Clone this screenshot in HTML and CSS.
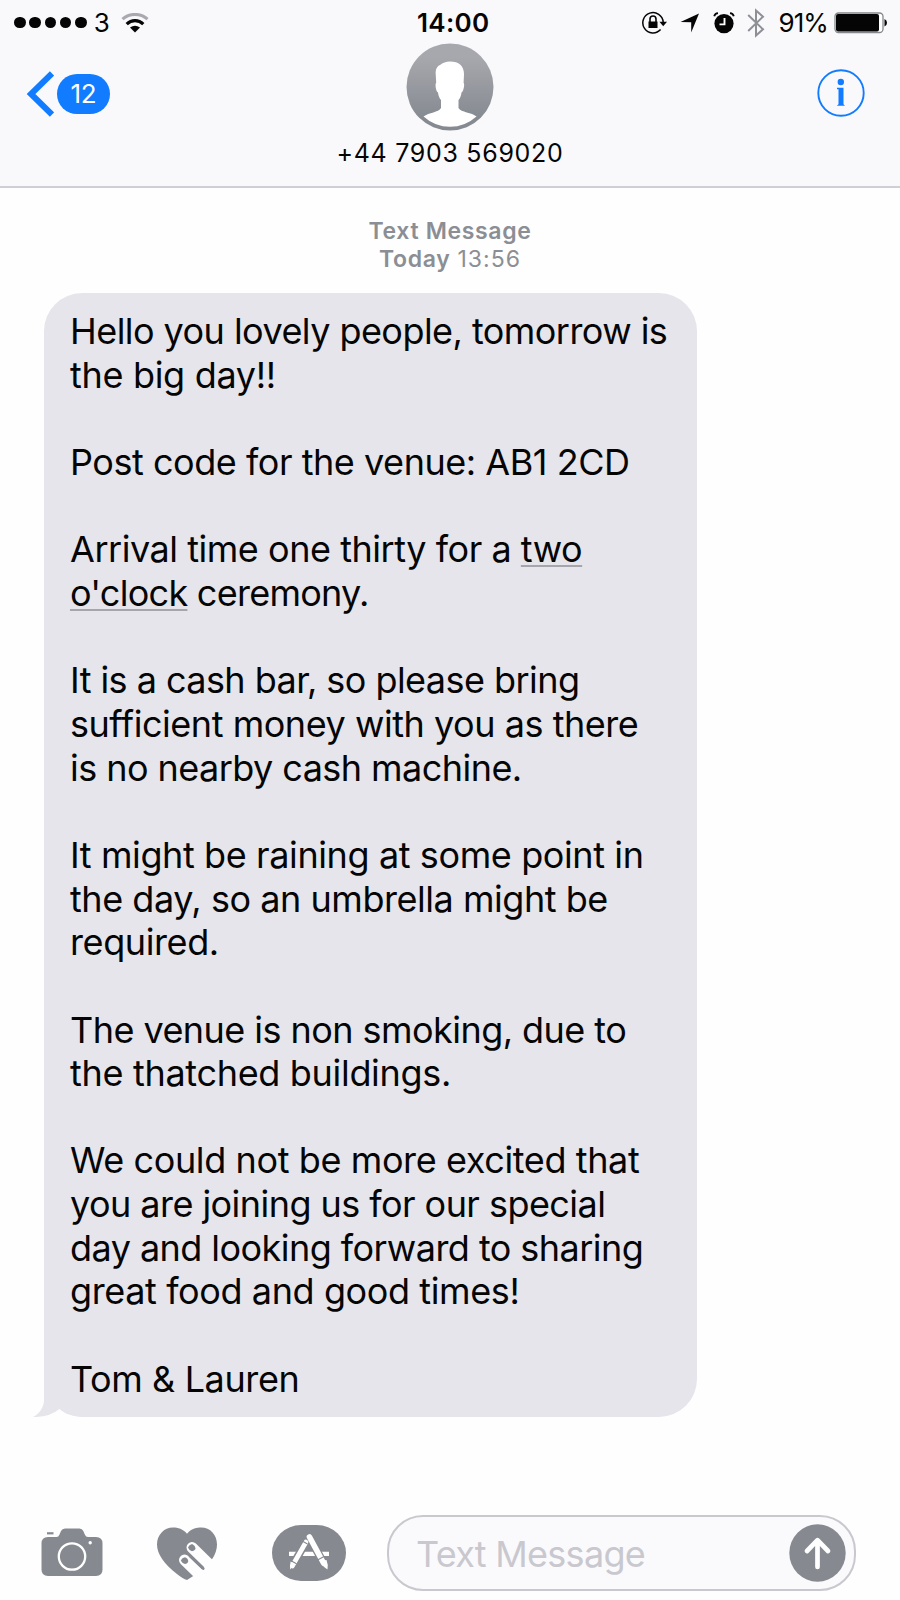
FILE: index.html
```
<!DOCTYPE html>
<html lang="en">
<head>
<meta charset="utf-8">
<title>Messages</title>
<link rel="stylesheet" href="styles.css">
</head>
<body>
<div class="screen">
  <header class="header">
    <div class="status">
      <div class="status-left">
        <div class="signal"><i></i><i></i><i></i><i></i><i></i></div>
        <span class="carrier">3</span>
        <svg class="wifi" width="28" height="20" viewBox="0 0 28 20">
          <path d="M1.5 6.2C8.5-.2 19.500-.2 26.500 6.200" fill="none" stroke="#a9a9af" stroke-width="3"/>
          <path d="M5.700 11.200C10.500 6.500 17.500 6.500 22.300 11.200" fill="none" stroke="#050505" stroke-width="3.200"/>
          <path d="M9 14.500Q14 11.200 19 14.500L14 19.500Z" fill="#050505"/>
        </svg>
      </div>
      <div class="time">14:00</div>
      <div class="status-right">
        <svg class="lock" width="26" height="24" viewBox="0 0 26 24">
          <path d="M18.600 18.600A10.200 10.200 0 1 1 21.200 11" fill="none" stroke="#050505" stroke-width="1.500"/>
          <path d="M17.500 10.800h7.500l-3.800 4.500z" fill="#050505"/>
          <rect x="6.500" y="10.500" width="9" height="6.500" fill="#050505"/>
          <path d="M8 11V8a3 3 0 0 1 6 0v3" fill="none" stroke="#050505" stroke-width="1.600"/>
        </svg>
        <svg class="arrow" width="20" height="20" viewBox="0 0 20 20"><path d="M19 .5L11.200 19.500V9.300L.5 9Z" fill="#050505"/></svg>
        <svg class="alarm" width="22" height="22" viewBox="0 0 22 22">
          <circle cx="11" cy="11.600" r="9.600" fill="#050505"/>
          <path d="M1.200 4.200Q2 1.500 5 1.200M17 1.200Q20 1.500 20.800 4.200" fill="none" stroke="#050505" stroke-width="1.800"/>
          <path d="M11.500 6v6.400H6.500" fill="none" stroke="#fff" stroke-width="1.900"/>
        </svg>
        <svg class="bluetooth" width="18" height="30" viewBox="0 0 18 30"><path d="M1.200 7L16 21.300 9 27.500V2.500L16 8.700 1.200 23" fill="none" stroke="#8e9096" stroke-width="2"/></svg>
        <span class="percent">91%</span>
        <svg class="battery" width="54" height="22" viewBox="0 0 54 22">
          <rect x="1" y="1" width="48" height="19.500" rx="3.500" fill="#fff" stroke="#85878c" stroke-width="1.300"/>
          <rect x="2" y="2" width="43" height="17.500" rx="2" fill="#050505"/>
          <path d="M50.500 7Q53 8 53 10.800T50.500 14.600Z" fill="#050505"/>
        </svg>
      </div>
    </div>
    <div class="nav">
      <div class="back">
        <svg width="28" height="46" viewBox="0 0 28 46"><path d="M26 2.500L5 23L26 43.500" fill="none" stroke="#117cff" stroke-width="6"/></svg>
        <span class="count">12</span>
      </div>
      <div class="contact">
        <svg width="88" height="88" viewBox="0 0 88 88">
          <defs><linearGradient id="shade" x1="0" y1="0" x2="0" y2="1"><stop offset=".15" stop-color="#a7a8ae"/><stop offset=".85" stop-color="#868b91"/></linearGradient></defs>
          <circle cx="44" cy="44" r="43.500" fill="url(#shade)"/>
          <path d="M44 18.500C53 18.500 58 23 58 31L57.600 40C58.800 40 58 48 55.500 49.500C55 53 54 55.500 52.500 57V65C55 69.500 66 69.500 70.500 73.500Q59 83.800 44 83.800T17.500 73.500C23 69.500 32.500 69.500 35 65V57C33.500 55.500 32.500 53 32 49.500C29.500 48 29 40 30.200 40L29.700 31C29.500 26 31 23.500 34 22Q38 18.500 44 18.500Z" fill="#fff"/>
        </svg>
        <span class="number">+44 7903 569020</span>
      </div>
      <svg class="info" width="48" height="48" viewBox="0 0 48 48">
        <circle cx="24" cy="24" r="22.700" fill="none" stroke="#117cff" stroke-width="1.900"/>
        <circle cx="23.800" cy="13" r="3.200" fill="#117cff"/>
        <path d="M20 18.800H26.500V35.200L28 36.700H19.800L21.500 35.200V20.300H20Z" fill="#117cff"/>
      </svg>
    </div>
  </header>

  <main class="thread">
    <div class="stamp"><b>Text Message</b><br><b>Today</b> <span class="stamp-time">13:56</span></div>
    <div class="bubble">
      <p><span class="line tight">Hello you lovely people, tomorrow is</span><span class="line loose">the big day!!</span></p>
      <p><span class="line">Post code for the venue: AB1 2CD</span></p>
      <p><span class="line">Arrival time one thirty for a <u>two</u></span><span class="line tighter"><u>o'clock</u> ceremony.</span></p>
      <p><span class="line tight">It is a cash bar, so please bring</span><span class="line">sufficient money with you as there</span><span class="line tight">is no nearby cash machine.</span></p>
      <p><span class="line mid">It might be raining at some point in</span><span class="line">the day, so an umbrella might be</span><span class="line mid">required.</span></p>
      <p><span class="line tight">The venue is non smoking, due to</span><span class="line loose">the thatched buildings.</span></p>
      <p><span class="line mid">We could not be more excited that</span><span class="line tight">you are joining us for our special</span><span class="line tight">day and looking forward to sharing</span><span class="line mid">great food and good times!</span></p>
      <p><span class="line mid">Tom &amp; Lauren</span></p>
      <svg class="tail" width="54" height="38" viewBox="0 0 54 38"><path d="M11 0V22C10.500 29 6 35 0 38Q16 38.500 26.500 30Q36 38 54 38V16H24V0Z" fill="#e6e5eb"/><path d="M17 38Q22 34.500 26.500 30Q31 34.500 38 38Z" fill="#fefefe"/></svg>
    </div>
  </main>

  <footer class="composer">
    <svg class="camera" width="62" height="49" viewBox="0 0 62 49">
      <path d="M7 9H15.500Q17.500 9 18.500 6.500L20 3Q21.200.5 24 .5H38.500Q41.200.5 42.300 3L43.800 6.500Q44.800 9 47 9H55Q61.500 9 61.500 15.500V41.500Q61.500 48 55 48H7Q.500 48 .500 41.500V15.500Q.500 9 7 9Z" fill="#868a90"/>
      <path d="M6 5.300H12.500" stroke="#868a90" stroke-width="2.200"/>
      <circle cx="31" cy="28.500" r="13.200" fill="none" stroke="#fff" stroke-width="2.300"/>
      <circle cx="49.200" cy="14.800" r="1.700" fill="#fff"/>
    </svg>
    <svg class="heart" width="62" height="54" viewBox="0 0 62 54">
      <path d="M31 6.700C36 1 41 .5 45 .5C54.500.5 61 8 61 17.500Q61 25 56 32.200L42 46L31 53Q27 52 21 47C8 37 1 27 1 17.500C1 8 8 .5 17 .5C22 .5 27 2 31 6.700Z" fill="#868a90"/>
      <path d="M62 26L54 36L36.500 54.500H62Z" fill="#fefefe"/>
      <g stroke="#fefefe" stroke-width="11" stroke-linecap="round"><path d="M36 20.500L60 44"/><path d="M28.500 33L46 50"/></g>
      <path d="M34 29L47.200 41.500" stroke="#868a90" stroke-width="2.800" stroke-linecap="round"/>
      <path d="M32 20.500Q33 17.500 36 17Q39.500 18.500 39.500 22Q38.500 24 36 24.200Q33 23.500 32 20.500Z" fill="#868a90"/>
      <path d="M24.800 33.500Q26 30.500 29 30.200Q32.500 31.500 32.200 35Q31 37 29 37Q26 36.300 24.800 33.500Z" fill="#868a90"/>
    </svg>
    <svg class="apps" width="74" height="56" viewBox="0 0 74 56">
      <rect width="74" height="56" rx="29" ry="28" fill="#868a90"/>
      <path d="M17 28.800H57" stroke="#fff" stroke-width="4.300"/>
      <path d="M34 17L20.300 41" stroke="#868a90" stroke-width="8"/>
      <path d="M37.500 12L53 41" stroke="#868a90" stroke-width="8"/>
      <path d="M37.500 12L51.500 38" stroke="#fff" stroke-width="5.600" stroke-linecap="round"/>
      <path d="M34 17L20.300 41" stroke="#fff" stroke-width="4.700" stroke-linecap="round"/>
      <path d="M18.500 36.500L23.300 39L18 44.500Z" fill="#fff"/>
      <path d="M48.500 36L54.500 35Q56.500 40 55.500 44.500Q50 41.500 48.500 36Z" fill="#fff"/>
      <path d="M46 34.700L52 31.500M19.500 36L24.500 38.800M31 16.500L35.500 19" stroke="#868a90" stroke-width="1.100"/>
    </svg>
    <div class="field">
      <span class="placeholder">Text Message</span>
      <svg class="send" width="57" height="58" viewBox="0 0 57 58">
        <ellipse cx="28.500" cy="29" rx="28.200" ry="28.700" fill="#868a90"/>
        <path d="M28.500 43V17M18 27L28.500 16.200L39 27" fill="none" stroke="#fff" stroke-width="4.700" stroke-linecap="round" stroke-linejoin="round"/>
      </svg>
    </div>
  </footer>
</div>
</body>
</html>
```
FILE: styles.css
```
* { box-sizing: border-box; }
body { margin: 0; font-family: Inter, "Open Sans", sans-serif; color: #050505; background: #fefefe; }
svg { display: block; flex: none; }
.screen { width: 900px; height: 1600px; display: flex; flex-direction: column; overflow: hidden; }

.header { height: 188px; flex: none; background: #f9f9fb; border-bottom: 2px solid #d0cfd5; }
.status { height: 43px; display: grid; grid-template-columns: 1fr 74px 1fr; padding: 0 12px 0 14px; font-size: 26px; line-height: 45px; }
.status-left, .status-right { display: flex; align-items: center; }
.signal { display: flex; gap: 3.7px; }
.signal i { width: 11.600px; height: 11.600px; border-radius: 50%; background: #050505; }
.carrier { margin-left: 7px; width: 17px; }
.wifi { margin-left: 10px; }
.time { font-weight: 600; letter-spacing: .3px; padding-left: 3px; white-space: nowrap; }
.status-right { justify-content: flex-end; }
.arrow { margin-left: 12px; }
.alarm { margin-left: 13px; }
.bluetooth { margin-left: 12px; }
.percent { margin-left: 13px; letter-spacing: -.9px; }
.battery { margin-left: 6px; }

.nav { height: 143px; display: grid; grid-template-columns: 1fr 240px 1fr; }
.back { display: flex; align-items: center; height: 46px; margin: 28px 0 0 26px; }
.count { width: 53px; height: 40px; margin-left: 3px; border-radius: 20px; background: #117cff; color: #fff; font-size: 26px; line-height: 40px; text-align: center; letter-spacing: -.2px; }
.contact { display: flex; flex-direction: column; align-items: center; }
.number { font-size: 25px; line-height: 32px; margin-top: 6px; letter-spacing: .7px; white-space: nowrap; }
.info { justify-self: end; margin: 26px 35px 0 0; }

.thread { flex: 1; padding-left: 44px; }
.stamp { width: 812px; height: 105px; padding-top: 29px; text-align: center; font-size: 23px; line-height: 28px; color: #8b8e94; letter-spacing: .65px; }
.stamp b { font-weight: 600; }
.stamp-time { letter-spacing: 1px; }
.bubble { position: relative; width: 653px; height: 1124px; padding: 17px 0 0 26px; border-radius: 38px; background: #e6e5eb; font-size: 36px; line-height: 43.660px; }
.bubble p { margin: 0 0 43.660px; }
.line { display: block; white-space: nowrap; letter-spacing: -.46px; }
.mid { letter-spacing: -.39px; }
.loose { letter-spacing: -.31px; }
.tight { letter-spacing: -.55px; }
.tighter { letter-spacing: -.73px; }
.bubble u { text-decoration-color: #a5a5ab; text-decoration-thickness: 2px; text-underline-offset: 3px; text-decoration-skip-ink: none; }
.tail { position: absolute; left: -11px; bottom: 0; }

.composer { height: 85px; flex: none; display: flex; align-items: flex-start; padding-left: 41px; }
.camera { margin-top: 13px; }
.heart { margin: 12px 0 0 53px; }
.apps { margin: 10px 0 0 54px; }
.field { display: flex; align-items: center; width: 469px; height: 76px; margin-left: 41px; padding: 0 8px 0 27px; border: 2px solid #c9c8ce; border-radius: 36px; background: #fafafc; }
.placeholder { flex: 1; font-size: 36px; line-height: 46px; padding-top: 1px; letter-spacing: -.72px; color: #c9c8ce; }
```
